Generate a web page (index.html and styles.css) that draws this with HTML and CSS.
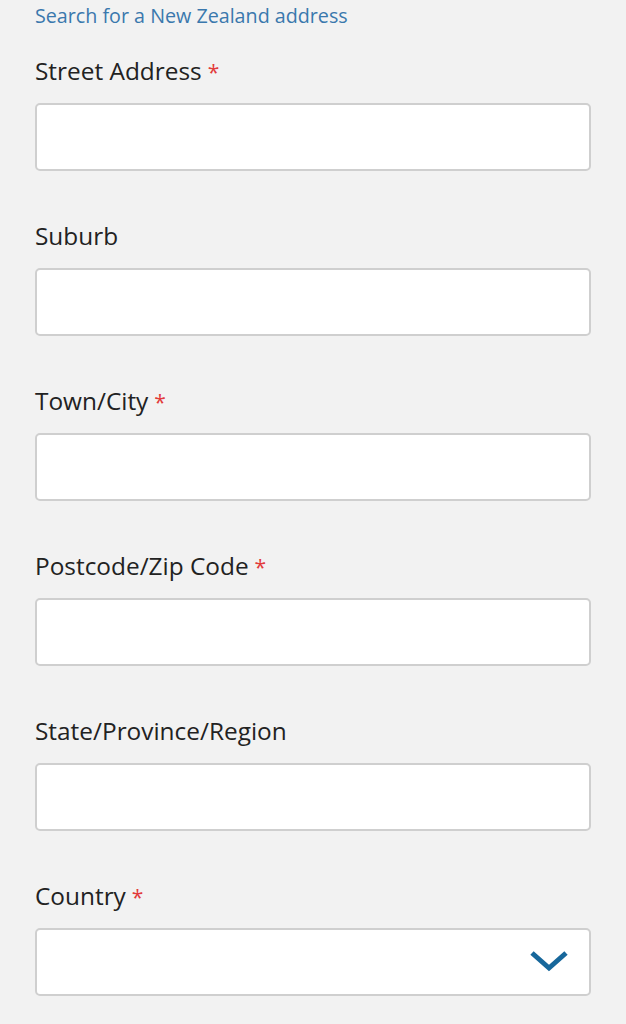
FILE: index.html
```html
<!DOCTYPE html>
<html>
<head>
<meta charset="utf-8">
<link rel="stylesheet" href="styles.css">
</head>
<body>
<form class="form">
  <a class="search-link" href="#">Search for a New Zealand address</a>
  <div class="fields">
    <div class="field">
      <label class="label">Street Address<span class="req">*</span></label>
      <div class="input"></div>
    </div>
    <div class="field">
      <label class="label">Suburb</label>
      <div class="input"></div>
    </div>
    <div class="field">
      <label class="label">Town/City<span class="req">*</span></label>
      <div class="input"></div>
    </div>
    <div class="field">
      <label class="label">Postcode/Zip Code<span class="req">*</span></label>
      <div class="input"></div>
    </div>
    <div class="field">
      <label class="label">State/Province/Region</label>
      <div class="input"></div>
    </div>
    <div class="field">
      <label class="label">Country<span class="req">*</span></label>
      <div class="input select">
        <svg class="chevron" width="40" height="24" viewBox="0 0 40 24"><path d="M3 4 L20 19 L37 4" fill="none" stroke="#17679b" stroke-width="5"/></svg>
      </div>
    </div>
  </div>
</form>
</body>
</html>
```

FILE: styles.css
```css
html, body {
  margin: 0;
  padding: 0;
  background: #f2f2f2;
}
body {
  font-family: "Open Sans", "Liberation Sans", sans-serif;
  color: #222;
}
.form {
  display: flex;
  flex-direction: column;
  padding: 4px 35px 0 35px;
}
.search-link {
  font-size: 19.7px;
  line-height: 24px;
  height: 24px;
  color: #3a78ad;
  text-decoration: none;
}
.fields {
  display: flex;
  flex-direction: column;
  gap: 49px;
  margin-top: 27px;
}
.field {
  display: flex;
  flex-direction: column;
  gap: 16px;
}
.label {
  display: block;
  height: 32px;
  font-size: 24.4px;
  line-height: 32px;
  color: #222;
  white-space: nowrap;
}
.req {
  color: #e23b3b;
  margin-left: 6px;
  font-size: 21px;
  line-height: 0;
}
.input {
  height: 64px;
  background: #fff;
  border: 2px solid #cfcfcf;
  border-radius: 5px;
}
.select {
  display: flex;
  align-items: center;
  justify-content: flex-end;
  padding-right: 20px;
}
.chevron {
  display: block;
  margin-top: -2px;
}
```
